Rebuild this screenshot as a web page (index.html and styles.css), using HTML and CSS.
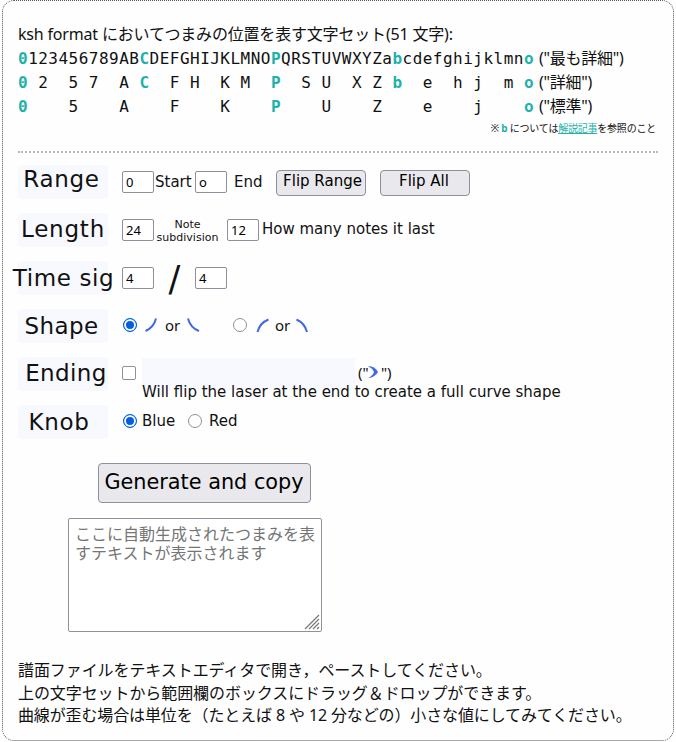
FILE: index.html
```html
<!DOCTYPE html>
<html lang="ja">
<head>
<meta charset="utf-8">
<title>ksh curve generator</title>
<link rel="stylesheet" href="styles.css">
</head>
<body>
<main class="card">
  <section class="charset">
    <div class="line"><span class="intro">ksh format においてつまみの位置を表す文字セット(51 文字):</span></div>
    <div class="line"><span class="mono"><b>0</b>123456789AB<b>C</b>DEFGHIJKLMNO<b>P</b>QRSTUVWXYZa<b>b</b>cdefghijklmn<b>o</b></span><span class="level">("最も詳細")</span></div>
    <div class="line"><span class="mono"><b>0</b> 2  5 7  A <b>C</b>  F H  K M  <b>P</b>  S U  X Z <b>b</b>  e  h j  m <b>o</b></span><span class="level">("詳細")</span></div>
    <div class="line"><span class="mono"><b>0</b>    5    A    F    K    <b>P</b>    U    Z    e    j    <b>o</b></span><span class="level">("標準")</span></div>
    <p class="note"><span>※ <b>b</b> については<a href="#">解説記事</a>を参照のこと</span></p>
  </section>
  <form class="form">
    <div class="row">
      <div class="label range"><span>Range</span></div>
      <input class="num" value="0"><span class="text start">Start</span>
      <input class="num" value="o"><span class="text end">End</span>
      <button type="button" class="btn flip-range"><span>Flip Range</span></button>
      <button type="button" class="btn flip-all"><span>Flip All</span></button>
    </div>
    <div class="row">
      <div class="label length"><span>Length</span></div>
      <input class="num" value="24"><span class="sub">Note<br>subdivision</span>
      <input class="num" value="12"><span class="text many">How many notes it last</span>
    </div>
    <div class="row">
      <div class="label time"><span>Time sig</span></div>
      <input class="num" value="4"><span class="slash">/</span>
      <input class="num" value="4">
    </div>
    <div class="row">
      <div class="label shape"><span>Shape</span></div>
      <div class="choice">
        <input type="radio" name="shape" checked>
        <svg class="curve first" width="14" height="16" viewBox="0 0 14 16"><path d="M1.500 14C7.500 11.500 10.500 7.500 12 1.500"/></svg>
        <span class="or">or</span>
        <svg class="curve" width="14" height="16" viewBox="0 0 14 16"><path d="M1 1.500C2.500 7.500 5.500 11.500 12 14"/></svg>
      </div>
      <div class="choice second">
        <input type="radio" name="shape">
        <svg class="curve first" width="14" height="16" viewBox="0 0 14 16"><path d="M1.500 15C3 9 6 5 12.500 2.500"/></svg>
        <span class="or">or</span>
        <svg class="curve" width="14" height="16" viewBox="0 0 14 16"><path d="M1.500 2.500C7 5 10.500 9 12 15"/></svg>
      </div>
    </div>
    <div class="row">
      <div class="label ending"><span>Ending</span></div>
      <input type="checkbox">
      <div class="description">
        <div class="example"><span class="swatch"></span><span class="quote">("</span><svg width="12" height="14" viewBox="0 0 12 14"><path d="M1 1Q8 1 11 7Q8 12.500 1 13Q6 10.500 7 7Q5 3 1 1Z"/></svg><span class="quote close">")</span></div>
        <span class="text flip">Will flip the laser at the end to create a full curve shape</span>
      </div>
    </div>
    <div class="row">
      <div class="label knob"><span>Knob</span></div>
      <div class="choice knobs">
        <input type="radio" name="knob" checked><span class="text blue">Blue</span>
        <input type="radio" name="knob"><span class="text red">Red</span>
      </div>
    </div>
  </form>
  <button class="btn generate" type="button"><span>Generate and copy</span></button>
  <div class="output">
    <textarea placeholder="ここに自動生成されたつまみを表すテキストが表示されます"></textarea>
    <svg class="grip" width="16" height="16" viewBox="0 0 16 16"><path d="M1 15 15 1M5 15 15 5M9 15 15 9M13 15 15 13"/></svg>
  </div>
  <section class="help">
    <div><span class="h1">譜面ファイルをテキストエディタで開き，ペーストしてください。</span></div>
    <div><span class="h2">上の文字セットから範囲欄のボックスにドラッグ＆ドロップができます。</span></div>
    <div><span class="h3">曲線が歪む場合は単位を（たとえば 8 や 12 分などの）小さな値にしてみてください。</span></div>
  </section>
</main>
</body>
</html>
```
FILE: styles.css
```css
* { box-sizing: border-box; }
body {
  margin: 0;
  padding: 0 2px;
  background: #fefefe;
  color: #111;
  font: 16px "Noto Sans", "Noto Sans CJK JP", sans-serif;
  white-space: nowrap;
}
.card {
  width: 672px;
  height: 741px;
  border: 1px dotted #555;
  border-radius: 12px;
  padding: 21px 15px 0;
}
.charset {
  height: 131px;
  width: 640px;
  border-bottom: 2px dotted #b8b8b8;
}
.line { height: 24px; line-height: 24px; display: flex; }
.intro { letter-spacing: -.18px; }
.mono {
  width: 521px;
  padding-top: 1px;
  font: 16px/24px "DejaVu Sans Mono", monospace;
  letter-spacing: .485px;
  white-space: pre;
}
.level { letter-spacing: -.25px; }
b, a { color: #20b2aa; }
.note { margin: 0; width: 638px; font-size: 10px; line-height: 20px; text-align: right; letter-spacing: -.22px; }
.form { padding-top: 6px; }
.row { height: 48px; display: flex; align-items: flex-start; padding-top: 6px; }
.label {
  width: 90px;
  height: 34px;
  margin: 0 14px 0 0;
  border-radius: 4px;
  background: #f8f9ff;
  display: flex;
  justify-content: center;
  flex-shrink: 0;
  font: 23px/30px "DejaVu Sans", sans-serif;
  letter-spacing: .5px;
}
.range { padding-right: 3px; line-height: 28px; letter-spacing: .7px; }
.length { padding-top: 1px; letter-spacing: .8px; }
.time { padding: 2px 0 0 1px; letter-spacing: .6px; }
.shape { padding: 2px 3px 0 0; letter-spacing: .4px; }
.ending { padding: 1px 0 0 6px; letter-spacing: .4px; }
.knob { padding: 2px 8px 0 0; letter-spacing: .7px; }
.text { font: 15px/22px "DejaVu Sans", sans-serif; margin-top: 6px; }
input { margin: 0; }
.num {
  width: 32px;
  height: 22px;
  margin-top: 6px;
  border: 1px solid #8f8f9d;
  border-radius: 2px;
  padding: 0 3px 1px;
  background: #fff;
  font: 13px "Noto Sans", sans-serif;
  flex-shrink: 0;
}
.start { width: 41px; padding-left: 1px; }
.end { width: 49px; padding-left: 7px; }
.btn {
  height: 26px;
  width: 90px;
  margin: 5px 14px 0 0;
  padding: 0;
  border: 1px solid #8f8f9d;
  border-radius: 4px;
  background: #e9e9ed;
  color: #000;
  font: 15px/21px "DejaVu Sans", sans-serif;
  display: flex;
  justify-content: center;
}
.flip-range { padding-left: 3px; }
.flip-all { padding-right: 2px; }
.sub {
  width: 73px;
  padding-right: 6px;
  text-align: center;
  font: 11px/13px "DejaVu Sans", sans-serif;
  margin-top: 5px;
}
.many { margin-top: 5px; padding-left: 3px; }
.slash { width: 41px; font: 35px/36px "DejaVu Sans", sans-serif; text-align: center; }
.choice { display: flex; align-items: center; height: 32px; width: 110px; padding-left: 1px; }
input[type=radio], input[type=checkbox] {
  appearance: none;
  width: 14px;
  height: 14px;
  border: 1px solid #8f8f9d;
  border-radius: 50%;
  background: #fff;
  flex-shrink: 0;
}
input[type=radio]:checked { border-color: #0060df; background: #0060df; box-shadow: inset 0 0 0 2px #fff; }
input[type=checkbox] { border-radius: 2px; margin-top: 9px; }
.curve { fill: none; stroke: #4169e1; stroke-width: 2; }
.curve.first { margin: 0 7px 0 7px; }
.or { width: 16px; margin-right: 6px; font-size: 15px; }
.second .curve.first { margin: 0 5px 0 9px; }
.second .or { margin-right: 4px; }
.description { margin-left: 6px; }
.example { display: flex; height: 24px; align-items: center; }
.swatch { width: 213px; height: 32px; background: #f8f9ff; align-self: flex-start; margin-top: 1px; flex-shrink: 0; }
.quote { width: 12px; font-size: 15px; padding: 6px 0 0 3px; }
.close { padding-left: 2px; }
.example svg { fill: #4169e1; margin-top: 5px; }
.flip { display: block; margin: 0; position: relative; }
.blue { width: 46px; padding-left: 5px; margin: 0 5px 0 0; flex-shrink: 0; }
.red { padding-left: 7px; margin: 0; }
.knobs { width: 140px; }
.generate { width: 213px; height: 40px; margin: 16px 0 0 80px; padding-right: 1px; font-size: 20.8px; line-height: 36px; }
.output { width: 254px; height: 114px; margin: 15px 0 0 50px; position: relative; }
textarea {
  display: block;
  width: 254px;
  height: 114px;
  resize: none;
  overflow: hidden;
  border: 1px solid #8f8f9d;
  border-radius: 2px;
  padding: 5px 5px 5px 6px;
  background: #fff;
  font: 16px/19px "Noto Sans CJK JP", sans-serif;
}
textarea::placeholder { color: #757575; }
.grip { position: absolute; right: 2px; bottom: 2px; fill: none; stroke: #777; stroke-width: 1.2; }
.help { margin-top: 27px; line-height: 22.5px; letter-spacing: -.08px; }
.h3 { letter-spacing: -.13px; }
```
